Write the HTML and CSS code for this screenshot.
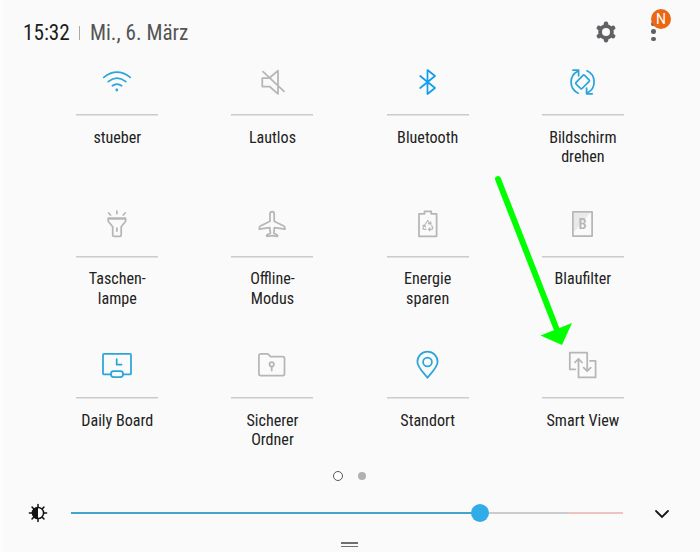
FILE: index.html
```html
<!DOCTYPE html>
<html lang="de">
<head>
<meta charset="utf-8">
<title>Schnelleinstellungen</title>
<link rel="stylesheet" href="styles.css">
</head>
<body>
<main class="panel">
  <header class="header">
    <span class="time"><span class="cond">15:32</span></span>
    <span class="divider"></span>
    <span class="date"><span class="cond">Mi., 6. März</span></span>
    <svg class="gear" viewBox="-12 -12 24 24"><g fill="#626266"><circle r="7.8"/><rect x="-2.2" y="-10.4" width="4.4" height="20.8" rx="1.8"/><rect x="-2.2" y="-10.4" width="4.4" height="20.8" rx="1.8" transform="rotate(60)"/><rect x="-2.2" y="-10.4" width="4.4" height="20.8" rx="1.8" transform="rotate(120)"/></g><circle r="4" fill="#fafafa"/></svg>
    <div class="more">
      <i></i><i></i><i></i>
      <span class="badge">N</span>
    </div>
  </header>

  <section class="tiles">
    <div class="tile on">
      <svg viewBox="0 0 40 40"><path d="M6.8 15.4Q20 5 33.2 15.4M11.2 19.6Q20 12.6 28.8 19.6M15.4 23.8Q20 20.4 24.6 23.8"/><circle class="solid" cx="19.8" cy="28" r="1.4"/></svg>
      <p><span class="cond">stueber</span></p>
    </div>
    <div class="tile">
      <svg viewBox="0 0 40 40"><path d="M10.3 16H17.5L26 8.6V31.8L17.5 24.5H10.3ZM11 9.6L32 29.4"/></svg>
      <p><span class="cond">Lautlos</span></p>
    </div>
    <div class="tile bright">
      <svg viewBox="0 0 40 40"><path d="M12.2 14L27 26L19.5 32V8L27 14L12.2 26"/></svg>
      <p><span class="cond">Bluetooth</span></p>
    </div>
    <div class="tile on">
      <svg viewBox="0 0 40 40"><path d="M15.2 31.2A12.3 12.3 0 0 1 14.6 9.2M10 8.2H15.6V13.8M24 8.8A12.3 12.3 0 0 1 24.6 30.8M29.2 31.8H23.6V26.2"/><path d="M21.4 13.2Q20.7 12.6 20 13.3L12.9 20.7Q12.400 21.400 13 22L17.800 26.600Q18.500 27.200 19.100 26.500L26.200 19.300Q26.800 18.600 26.100 17.900Z"/></svg>
      <p><span class="cond">Bildschirm</span><br><span class="cond">drehen</span></p>
    </div>

    <div class="tile">
      <svg viewBox="0 0 40 40"><path d="M11.2 14H28.6V17.2L24.2 22.8V31Q24.2 32.3 22.9 32.3H17Q15.7 32.3 15.7 31V22.8L11.2 17.2ZM11.2 14.8H28.6M19.9 24V27M19.9 7V9.6M11.6 9L13.5 11M28.2 9L26.3 11"/></svg>
      <p><span class="cond">Taschen-</span><br><span class="cond">lampe</span></p>
    </div>
    <div class="tile">
      <svg viewBox="0 0 40 40"><path d="M18 10Q18 7.6 20.1 7.6T22.2 10V17.2L31.8 22Q33 22.7 33 25.2L22.4 23.6L21.8 29.3L25.4 31V32.4L20.1 31.6L14.8 32.4V31L18.4 29.3L17.8 23.6L7.2 25.2Q7.2 22.7 8.4 22L18 17.2Z"/></svg>
      <p><span class="cond">Offline-</span><br><span class="cond">Modus</span></p>
    </div>
    <div class="tile">
      <svg viewBox="0 0 40 40"><path d="M11 9.8H16.5V7.4H23.2V9.8H28.6V32.3H11Z"/><path class="fine" d="M17.4 20L19.8 16.5L22.2 20M22.9 19.8L22.7 17.8M22.2 20.2L20.5 19.7M23.7 21.4L24.7 24Q24.7 25.4 23.4 25.4H20.6L22 23.9M20.6 25.4L22 26.8M18 25.4H16.2Q14.5 25.3 15.1 23.8L16.7 21L17.4 23M16.7 21L14.8 21.6"/></svg>
      <p><span class="cond">Energie</span><br><span class="cond">sparen</span></p>
    </div>
    <div class="tile">
      <svg viewBox="0 0 40 40"><path class="shade" d="M11 9H27L11 28Z"/><path d="M9.9 7.9H29.1V32H9.9Z"/><text x="19.5" y="25.2">B</text></svg>
      <p><span class="cond">Blaufilter</span></p>
    </div>

    <div class="tile on">
      <svg viewBox="0 0 40 40"><path d="M13.7 29.4H7Q6 29.4 6 28.4V9.9Q6 8.9 7 8.9H33Q34 8.9 34 9.9V28.4Q34 29.4 33 29.4H26M19.7 14V19.7H24.5"/><rect x="14" y="26.2" width="12" height="6" rx="2.6"/></svg>
      <p><span class="cond">Daily Board</span></p>
    </div>
    <div class="tile">
      <svg viewBox="0 0 40 40"><path d="M8.7 8.9H15Q16 8.9 16.7 9.7L18.5 11.7H30.7Q32.5 11.7 32.5 13.5V28.8Q32.5 30.6 30.7 30.6H8.7Q6.9 30.6 6.9 28.8V10.7Q6.9 8.9 8.7 8.9ZM19.7 21.6V25.6"/><circle cx="19.7" cy="19.3" r="2.2"/></svg>
      <p><span class="cond">Sicherer</span><br><span class="cond">Ordner</span></p>
    </div>
    <div class="tile on">
      <svg viewBox="0 0 40 40"><path d="M19.5 32.8C16.5 28.5 9.4 22.5 9.4 16.8A10.1 10.1 0 0 1 29.6 16.8C29.6 22.5 22.5 28.5 19.5 32.8Z"/><circle cx="19.5" cy="17" r="4.4"/></svg>
      <p><span class="cond">Standort</span></p>
    </div>
    <div class="tile">
      <svg viewBox="0 0 40 40"><path d="M12.2 24.3H6.8V7.5H24.2V26M20.6 22.6L24.2 26.2L27.8 22.6M27 15.9H32.6V32.4H15.5V14M11.9 17.5L15.5 13.9L19.1 17.5"/></svg>
      <p><span class="cond">Smart View</span></p>
    </div>
  </section>

  <div class="pager"><i class="current"></i><i></i></div>

  <div class="brightness">
    <svg class="sun" viewBox="-10 -10 20 20"><g stroke="#111" stroke-width="1.5" stroke-linecap="round" fill="none"><circle r="5.6"/><path d="M0-6V-8.6M0 6V8.6M-6 0H-8.6M6 0H8.6M-4.3-4.3L-5.9-5.9M4.3-4.3L5.9-5.9M-4.3 4.3L-5.9 5.9M4.3 4.3L5.9 5.9"/></g><path d="M0-5.6A5.6 5.6 0 0 0 0 5.6Z" fill="#111"/></svg>
    <div class="track"><div class="fill"><b class="thumb"></b></div><div class="rest"></div><div class="hot"></div></div>
    <svg class="chevron" viewBox="0 0 16 10"><path d="M2 2L8 8L14 2" fill="none" stroke="#151515" stroke-width="1.8" stroke-linecap="round"/></svg>
  </div>
  <div class="handle"></div>

  <svg class="arrow" viewBox="0 0 90 180"><path d="M10 9L69 160" fill="none" stroke="#0f0" stroke-width="6" stroke-linecap="round"/><path d="M52.500 165.500L84 153L74 175Z" fill="#0f0"/></svg>
</main>
</body>
</html>
```

FILE: styles.css
```css
* { box-sizing: border-box; }
body { margin: 0; background: #fafafa; }

.panel {
  position: relative;
  width: 700px;
  height: 552px;
  overflow: hidden;
  background: #fafafa;
  border-left: 2px solid #fdfdfd;
  font-family: Roboto, "Liberation Sans", sans-serif;
  font-stretch: 75%;
  color: #222;
}

.cond { display: inline-block; white-space: nowrap; }

.header {
  display: flex;
  align-items: center;
  height: 62px;
  padding: 3px 0 0 21px;
  font-size: 21.2px;
}
.time { width: 46px; color: #1d1d1d; }
.divider { width: 1px; height: 14px; margin: 0 10px 0 10px; background: #aaa; }
.date { width: 100px; color: #555; }
.gear { width: 24px; height: 24px; margin-left: 404px; margin-top: -2px; }
.more {
  position: relative;
  display: flex;
  flex-direction: column;
  gap: 3px;
  margin: -2px 0 0 33px;
}
.more i { width: 4.6px; height: 4.6px; border-radius: 50%; background: #606064; }
.badge {
  position: absolute;
  left: 0;
  top: -13px;
  width: 20px;
  height: 20px;
  border-radius: 50%;
  background: #ec6614;
  color: #fff;
  font-size: 14px;
  font-stretch: 100%;
  line-height: 20px;
  text-align: center;
}

.tiles {
  display: grid;
  grid-template-columns: repeat(4, 155.2px);
  grid-auto-rows: 141.5px;
  margin-left: 37.7px;
}
.tile { display: flex; flex-direction: column; align-items: center; }
.tile svg {
  width: 40px;
  height: 40px;
  fill: none;
  stroke: #b6b6b6;
  stroke-width: 1.75;
  stroke-linecap: round;
  stroke-linejoin: round;
}
.tile.on svg { stroke: #2ca5da; }
.tile.bright svg { stroke: #129df0; }
.tile .solid { fill: #2ca5da; stroke: none; }
.tile .fine { stroke-width: 1.2; }
.tile .shade { fill: #e9e9e9; stroke: none; }
.tile text { fill: #b6b6b6; stroke: none; text-anchor: middle; font-size: 14.5px; font-weight: 600; font-stretch: 85%; }
.tile p {
  width: 82px;
  margin: 12px 0 0;
  padding-top: 12.500px;
  background: linear-gradient(#cbcbcb, #cbcbcb) 0 0 / 100% 1.500px no-repeat;
  text-align: center;
  font-size: 16.1px;
  line-height: 19.5px;
  white-space: nowrap;
}
.tile .cond { position: relative; top: 1px; }

.pager { display: flex; align-items: center; gap: 15px; height: 10px; margin: -15.500px 0 0 331px; }
.pager i { width: 8px; height: 8px; border-radius: 50%; background: #b0b0b0; }
.pager .current { width: 10px; height: 10px; border: 1px solid #555; background: #fff; }

.brightness { display: flex; align-items: center; height: 20px; margin: 22px 0 0 26px; }
.sun { width: 20px; height: 20px; }
.track { display: flex; width: 552.5px; height: 2.5px; margin-left: 22.500px; }
.fill { position: relative; width: 409.5px; background: #45a3cc; }
.rest { width: 88px; background: #c9cccc; }
.hot { flex: 1; background: #efc3c1; }
.thumb { position: absolute; right: -9px; top: -8px; width: 18px; height: 18px; border-radius: 50%; background: #30ade8; }
.chevron { width: 16px; height: 10px; margin-left: 31px; margin-top: 2px; }
.handle { width: 17px; height: 5px; margin: 19px 0 0 339px; background: linear-gradient(#707070 1.500px, transparent 1.500px 3.500px, #707070 3.500px); }
.arrow { position: absolute; left: 486px; top: 170px; width: 90px; height: 180px; }
```
